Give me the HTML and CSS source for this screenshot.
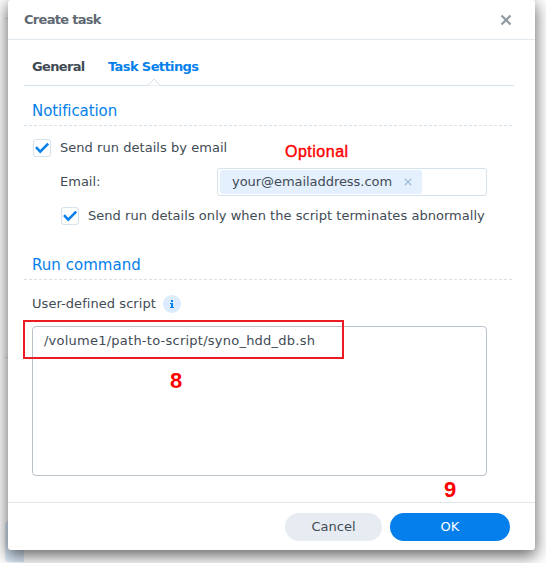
FILE: index.html
```html
<!DOCTYPE html>
<html lang="en">
<head>
<meta charset="utf-8">
<title>Create task</title>
<link rel="stylesheet" href="styles.css">
</head>
<body>
<div class="backdrop-lines"></div>
<div class="backdrop-button"></div>
<section class="dialog">
  <header class="header">
    <h1 class="title">Create task</h1>
    <svg class="close" width="12" height="12" viewBox="0 0 12 12"><path d="M1.5 1.5L10.5 10.5M10.5 1.5L1.5 10.5"/></svg>
  </header>
  <nav class="tabs">
    <span class="tab general">General</span>
    <span class="tab active">Task Settings<svg class="pointer" width="14" height="8" viewBox="0 0 14 8"><path d="M0.5 7.5L7 1L13.5 7.5"/></svg></span>
  </nav>
  <main class="content">
    <h2 class="heading"><span class="notification">Notification</span></h2>
    <div class="row first">
      <span class="checkbox"><svg width="16" height="16" viewBox="0 0 16 16"><path d="M2 7.2L6.2 11.6L14.2 3.6"/></svg></span>
      <span class="send">Send run details by email</span>
      <span class="note optional">Optional</span>
    </div>
    <div class="row email">
      <span class="label">Email:</span>
      <div class="field"><span class="tag"><span class="address">your@emailaddress.com</span><svg width="8" height="8" viewBox="0 0 8 8"><path d="M.7.7L7.3 7.3M7.3.7L.7 7.3"/></svg></span></div>
    </div>
    <div class="row nested">
      <span class="checkbox"><svg width="16" height="16" viewBox="0 0 16 16"><path d="M2 7.2L6.2 11.6L14.2 3.6"/></svg></span>
      <span class="abnormal">Send run details only when the script terminates abnormally</span>
    </div>
    <h2 class="heading command"><span class="run">Run command</span></h2>
    <div class="row script-label"><span class="user">User-defined script</span>
      <svg class="info" width="18" height="18" viewBox="0 0 18 18"><circle cx="9" cy="9" r="9"/><path d="M8 5h2v2H8zM7 8h3v4h1v1H7v-1h1V9H7z"/></svg>
    </div>
    <div class="script"><span class="path">/volume1/path-to-script/syno_hdd_db.sh</span></div>
  </main>
  <footer class="footer">
    <div class="button cancel"><span>Cancel</span></div>
    <div class="button ok"><span>OK</span></div>
  </footer>
  <div class="outline"></div>
  <span class="note eight">8</span>
  <span class="note nine">9</span>
</section>
</body>
</html>
```
FILE: styles.css
```css
* { box-sizing: border-box; }
body {
  margin: 0;
  width: 546px;
  height: 563px;
  overflow: hidden;
  background: #fff;
  color: #414b55;
  font: 13px/18px Verdana, "DejaVu Sans", sans-serif;
  white-space: nowrap;
}
.backdrop-lines {
  position: absolute;
  left: 5px;
  top: 18px;
  width: 531px;
  height: 340px;
  border-top: 1px solid #dce3e9;
  border-bottom: 1px solid #dce3e9;
  clip-path: inset(0 500px 0 0);
}
.backdrop-button {
  position: absolute;
  left: 5px;
  top: 521px;
  width: 19px;
  height: 41px;
  border-radius: 4px 0 0 4px;
  background: #dcecfa;
}
.dialog {
  position: relative;
  width: 527px;
  height: 550px;
  margin-left: 8px;
  border-radius: 3px;
  background: #fff;
  box-shadow: 0 5px 16px 1px rgba(0, 0, 0, .6);
}
.header {
  display: flex;
  align-items: center;
  justify-content: space-between;
  height: 40px;
  padding: 0 23px 0 16px;
  border-bottom: 1px solid #e1e8ee;
}
.title { margin: 0; font-size: 13px; color: #5f6973; letter-spacing: -.7px; }
.close { fill: none; stroke: #949ca3; stroke-width: 2.3; }
.tabs {
  display: flex;
  gap: 24px;
  height: 46px;
  margin: 0 21px 0 16px;
  padding: 18px 8px 0;
  border-bottom: 1px solid #d5e1eb;
  font-weight: bold;
}
.tab { position: relative; letter-spacing: -.6px; }
.general { width: 52px; letter-spacing: -.65px; }
.active { color: #057feb; }
.pointer {
  position: absolute;
  left: 39px;
  top: 20px;
  fill: #fff;
  stroke: #d5e1eb;
}
.content { height: 416px; padding: 0 21px 0 16px; }
.heading {
  height: 40px;
  margin: 0;
  padding: 16px 8px 0;
  background: repeating-linear-gradient(90deg, #d5e1eb 0 3px, transparent 3px 5px) 0 bottom / 100% 1px no-repeat;
  color: #057feb;
  font-size: 15px;
  font-weight: normal;
}
.notification { letter-spacing: -.08px; }
.run { letter-spacing: .03px; }
.row { display: flex; align-items: center; }
.first { height: 43px; padding: 1px 0 0 9px; }
.checkbox {
  width: 18px;
  height: 18px;
  margin-right: 9px;
  border: 1px solid #d5e1eb;
  border-radius: 3px;
}
.checkbox svg { display: block; fill: none; stroke: #057feb; stroke-width: 2.5; }
.send { width: 167px; letter-spacing: .04px; }
.abnormal { letter-spacing: .035px; }
.user { width: 124px; letter-spacing: .06px; }
.note { color: #f00; font-family: Arial, "Liberation Sans", sans-serif; }
.optional { margin: 7px 0 0 58px; font-size: 16px; letter-spacing: .5px; -webkit-text-stroke: .4px #f00; }
.email { height: 28px; margin-top: -1px; padding-left: 36px; }
.label { width: 157px; }
.field {
  width: 270px;
  height: 28px;
  padding: 1px 2px;
  border: 1px solid #d5e1eb;
  border-radius: 3px;
}
.tag {
  display: flex;
  align-items: center;
  justify-content: space-between;
  width: 202px;
  height: 24px;
  padding: 0 10px 0 12px;
  border-radius: 3px;
  background: #e4f0fd;
}
.tag svg { fill: none; stroke: #a3bfdb; stroke-width: 1.3; }
.address { letter-spacing: -.05px; }
.nested { height: 40px; padding-left: 37px; }
.command { height: 44px; padding-top: 20px; background-image: repeating-linear-gradient(90deg, #dedede 0 3px, transparent 3px 5px); }
.script-label { height: 46px; padding: 2px 0 0 8px; gap: 7px; }
.info { fill: #dcebfd; }
.info path { fill: #057feb; }
.script {
  width: 455px;
  height: 150px;
  margin-left: 8px;
  padding: 5px 11px;
  border: 1px solid #b9c1c9;
  border-radius: 4px;
}
.path { letter-spacing: .24px; }
.footer {
  display: flex;
  align-items: center;
  justify-content: flex-end;
  gap: 8px;
  height: 48px;
  padding: 0 25px 0 0;
  border-top: 1px solid #dfe7ed;
}
.button {
  width: 97px;
  height: 28px;
  border-radius: 14px;
  background: #e7ecf3;
  line-height: 28px;
  text-align: center;
}
.ok { width: 120px; background: #057feb; color: #fff; }
.outline {
  position: absolute;
  left: 15px;
  top: 320px;
  width: 321px;
  height: 39px;
  border: 2px solid #ed1c24;
}
.eight, .nine { position: absolute; font-size: 22px; font-weight: bold; line-height: 24px; }
.eight { left: 162px; top: 369px; }
.nine { left: 436px; top: 478px; }
```
